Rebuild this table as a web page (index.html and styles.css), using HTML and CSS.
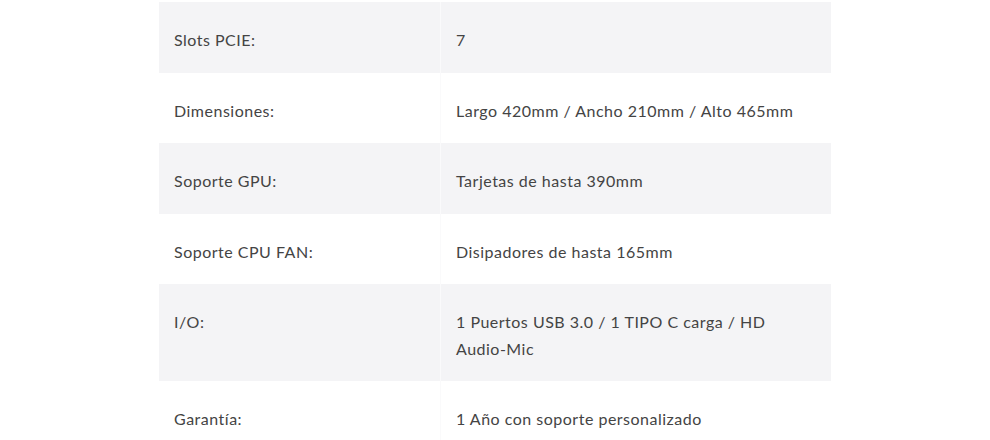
FILE: index.html
```html
<!DOCTYPE html>
<html lang="es">
<head>
<meta charset="utf-8">
<title>Especificaciones</title>
<link rel="stylesheet" href="styles.css">
</head>
<body>
<div class="page">
  <table class="specs">
    <tbody>
      <tr class="odd"><td class="label">Slots PCIE:</td><td class="value">7</td></tr>
      <tr><td class="label">Dimensiones:</td><td class="value">Largo 420mm / Ancho 210mm / Alto 465mm</td></tr>
      <tr class="odd"><td class="label">Soporte GPU:</td><td class="value">Tarjetas de hasta 390mm</td></tr>
      <tr><td class="label">Soporte CPU FAN:</td><td class="value">Disipadores de hasta 165mm</td></tr>
      <tr class="odd"><td class="label">I/O:</td><td class="value">1 Puertos USB 3.0 / 1 TIPO C carga / HD Audio-Mic</td></tr>
      <tr><td class="label">Garantía:</td><td class="value">1 Año con soporte personalizado</td></tr>
    </tbody>
  </table>
</div>
</body>
</html>
```
FILE: styles.css
```css
html, body {
  margin: 0;
  padding: 0;
  background: #ffffff;
}
.page {
  padding-top: 2px;
  display: flex;
  justify-content: center;
}
.specs {
  width: 672px;
  border-collapse: collapse;
  font-family: Lato, "Liberation Sans", sans-serif;
  font-size: 16px;
  letter-spacing: 0.5px;
  line-height: 26.5px;
  color: #444444;
}
.specs td {
  padding: 25px 15px 19px 15px;
  vertical-align: top;
  text-align: left;
}
.specs .label {
  width: 251px;
  border-right: 1px solid #fafafb;
}
.specs .value {
  padding-left: 15px;
}
.specs tr.odd td {
  background: #f4f4f6;
}
```
